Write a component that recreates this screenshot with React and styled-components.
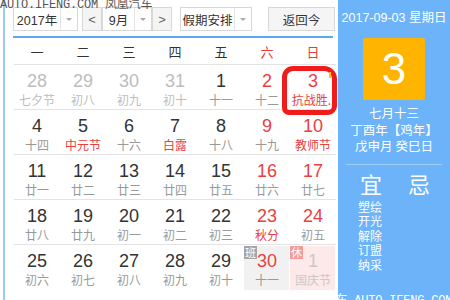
import styled, { createGlobalStyle } from 'styled-components';

const GlobalStyle = createGlobalStyle`
  html, body {
    margin: 0;
    padding: 0;
    background: #fff;
    overflow: hidden;
  }
  body {
    font-family: "Noto Sans CJK SC", "Liberation Sans", sans-serif;
  }
`;

const Page = styled.div`
  position: relative;
  width: 450px;
  height: 300px;
  overflow: hidden;
  background: #fff;
`;

const Frame = styled.div`
  margin-left: 3px;
  height: 300px;
  display: flex;
  border-left: 2px solid #9fc9f5;
`;

const CalendarArea = styled.div`
  width: 333px;
  flex-shrink: 0;
  position: relative;
`;

const Toolbar = styled.div`
  display: flex;
  align-items: center;
  height: 24px;
  margin: 7px 0 0 8px;
`;

const SelectBox = styled.div`
  display: flex;
  align-items: stretch;
  height: 22px;
  width: ${p => p.$w}px;
  border: 1px solid #d8d8d8;
  background: #fff;
  margin-left: ${p => p.$ml || 0}px;
  font-size: 12.5px;
  color: #333;
`;

const SelectLabel = styled.div`
  flex: 1;
  display: flex;
  align-items: center;
  justify-content: center;
  font-family: "Liberation Sans", "Noto Sans CJK SC", sans-serif;
`;

const SelectArrow = styled.div`
  width: 16px;
  border-left: 1px solid #e4e4e4;
  display: flex;
  align-items: center;
  justify-content: center;
  &::after {
    content: '';
    border-left: 3px solid transparent;
    border-right: 3px solid transparent;
    border-top: 3px solid #aaa;
  }
`;

const StepButton = styled.div`
  width: 18px;
  height: 22px;
  border: 1px solid #d8d8d8;
  background: #f4f4f4;
  margin-left: ${p => p.$ml || 0}px;
  display: flex;
  align-items: center;
  justify-content: center;
  color: #666;
  font-size: 13px;
  font-family: "Liberation Sans", sans-serif;
`;

const TodayButton = styled.div`
  width: 65px;
  height: 22px;
  border: 1px solid #d8d8d8;
  background: #f5f5f5;
  margin-left: 16px;
  display: flex;
  align-items: center;
  justify-content: center;
  font-size: 12.5px;
  color: #333;
`;

const BlueRule = styled.div`
  height: 2px;
  background: #5aa7f4;
  margin: 5px 5px 0 8px;
`;

const Grid = styled.div`
  display: grid;
  grid-template-columns: repeat(7, 46px);
  margin-left: 9px;
`;

const WeekHead = styled.div`
  height: 26px;
  display: flex;
  align-items: center;
  justify-content: center;
  font-size: 13px;
  color: ${p => (p.$red ? '#e53b3b' : '#333')};
  border-bottom: 1px solid #e3e3e3;
`;

const Cell = styled.div`
  position: relative;
  height: 45px;
  border-bottom: ${p => (p.$last ? 'none' : '1px solid #e3e3e3')};
  display: flex;
  flex-direction: column;
  align-items: center;
  padding-top: 6px;
  box-sizing: border-box;
  &::before {
    content: '';
    position: absolute;
    left: 0;
    right: 1px;
    top: 1px;
    bottom: 0;
    background: ${p => p.$bg || 'transparent'};
    z-index: 0;
  }
`;

const DayNum = styled.div`
  position: relative;
  font-family: "Liberation Sans", sans-serif;
  font-size: 18px;
  line-height: 21px;
  color: ${p => p.$c};
`;

const Lunar = styled.div`
  position: relative;
  font-size: 12px;
  line-height: 15px;
  color: ${p => p.$c};
  white-space: nowrap;
`;

const Badge = styled.div`
  position: absolute;
  left: 0;
  top: 1px;
  width: 13px;
  height: 13px;
  font-size: 11px;
  line-height: 13px;
  text-align: center;
  color: #fff;
  background: ${p => p.$bg};
  z-index: 1;
`;

const Marker = styled.div`
  position: absolute;
  left: 277px;
  top: 66px;
  width: 45px;
  height: 39px;
  border: 5px solid #f01c1c;
  border-radius: 11px 13px 9px 7px;
  pointer-events: none;
  &::after {
    content: '';
    position: absolute;
    right: 1px;
    top: 1px;
    width: 2px;
    height: 6px;
    background: #f6c21a;
  }
`;

const SidePanel = styled.div`
  flex: 1;
  background: #6cb3fa;
  color: #fff;
  display: flex;
  flex-direction: column;
  align-items: center;
`;

const SideDate = styled.div`
  margin-top: 9px;
  font-size: 12.5px;
  line-height: 18px;
  font-family: "Liberation Sans", "Noto Sans CJK SC", sans-serif;
`;

const BigDay = styled.div`
  margin-top: 11px;
  width: 62px;
  height: 62px;
  background: #ffb400;
  border-radius: 2px;
  display: flex;
  align-items: center;
  justify-content: center;
  font-family: "Liberation Sans", sans-serif;
  font-size: 44px;
  color: #fff;
`;

const InfoLine = styled.div`
  font-size: 12.5px;
  line-height: 16.5px;
  margin-top: ${p => p.$mt || 0}px;
`;

const SideRule = styled.div`
  align-self: stretch;
  height: 1px;
  background: #9dcdfb;
  margin: 9px 8px 0 8px;
`;

const YiJi = styled.div`
  display: flex;
  gap: 26px;
  margin-top: 5px;
  font-size: 22px;
  line-height: 26px;
  margin-left: 2px;
`;

const YiList = styled.div`
  align-self: flex-start;
  margin-left: 20px;
  margin-top: 4px;
  font-size: 12px;
  line-height: 14.6px;
`;

const Watermark = styled.div`
  position: absolute;
  font-family: "Liberation Mono", "Noto Sans CJK SC", monospace;
  font-size: 12px;
  white-space: nowrap;
  color: ${p => p.$c};
  left: ${p => p.$x}px;
  top: ${p => p.$y}px;
  letter-spacing: -0.2px;
`;

const weekdays = ['一', '二', '三', '四', '五', '六', '日'];

const RED = '#e8403f';
const DARK = '#333';
const GRAY = '#999';
const FADE = '#bdbdbd';

const days = [
  ['28', '七夕节', 'prev'], ['29', '初八', 'prev'], ['30', '初九', 'prev'], ['31', '初十', 'prev'],
  ['1', '十一'], ['2', '十二'], ['3', '抗战胜..', null, true],
  ['4', '十四'], ['5', '中元节', null, true], ['6', '十六'], ['7', '白露', null, true],
  ['8', '十八'], ['9', '十九'], ['10', '教师节', null, true],
  ['11', '廿一'], ['12', '廿二'], ['13', '廿三'], ['14', '廿四'],
  ['15', '廿五'], ['16', '廿六'], ['17', '廿七'],
  ['18', '廿八'], ['19', '廿九'], ['20', '初一'], ['21', '初二'],
  ['22', '初三'], ['23', '秋分', null, true], ['24', '初五'],
  ['25', '初六'], ['26', '初七'], ['27', '初八'], ['28', '初九'],
  ['29', '初十'], ['30', '十一', 'work'], ['1', '国庆节', 'rest'],
];

function DayCell({ day, index }) {
  const [num, lunar, kind, fest] = day;
  const col = index % 7;
  const weekend = col >= 5;
  const last = index >= 28;
  let numColor = weekend ? RED : DARK;
  let lunarColor = fest ? RED : GRAY;
  let bg;
  if (kind === 'prev') {
    numColor = FADE;
    lunarColor = FADE;
  }
  if (kind === 'work') bg = '#f1f1f1';
  if (kind === 'rest') {
    bg = '#fde9e9';
    numColor = '#c8c8c8';
    lunarColor = '#c8c8c8';
  }
  return (
    <Cell $bg={bg} $last={last}>
      {kind === 'work' && <Badge $bg="#a5a5a5">班</Badge>}
      {kind === 'rest' && <Badge $bg="#f59a9a">休</Badge>}
      <DayNum $c={numColor}>{num}</DayNum>
      <Lunar $c={lunarColor}>{lunar}</Lunar>
    </Cell>
  );
}

export default function App() {
  return (
    <Page>
      <GlobalStyle />
      <Frame>
        <CalendarArea>
          <Toolbar>
            <SelectBox $w={63}>
              <SelectLabel>2017年</SelectLabel>
              <SelectArrow />
            </SelectBox>
            <StepButton $ml={4}>&lt;</StepButton>
            <SelectBox $w={48}>
              <SelectLabel>9月</SelectLabel>
              <SelectArrow />
            </SelectBox>
            <StepButton>&gt;</StepButton>
            <SelectBox $w={70} $ml={8}>
              <SelectLabel>假期安排</SelectLabel>
              <SelectArrow />
            </SelectBox>
            <TodayButton>返回今</TodayButton>
          </Toolbar>
          <BlueRule />
          <Grid>
            {weekdays.map((w, i) => (
              <WeekHead key={w} $red={i >= 5}>{w}</WeekHead>
            ))}
            {days.map((d, i) => (
              <DayCell key={i} day={d} index={i} />
            ))}
          </Grid>
          <Marker />
        </CalendarArea>
        <SidePanel>
          <SideDate>2017-09-03 星期日</SideDate>
          <BigDay>3</BigDay>
          <InfoLine $mt={5}>七月十三</InfoLine>
          <InfoLine>丁酉年【鸡年】</InfoLine>
          <InfoLine>戊申月 癸巳日</InfoLine>
          <SideRule />
          <YiJi>
            <span>宜</span>
            <span>忌</span>
          </YiJi>
          <YiList>
            <div>塑绘</div>
            <div>开光</div>
            <div>解除</div>
            <div>订盟</div>
            <div>纳采</div>
          </YiList>
        </SidePanel>
      </Frame>
      <Watermark $c="#555" $x={0} $y={-6}>AUTO.IFENG.COM 凤凰汽车</Watermark>
      <Watermark $c="#fff" $x={300} $y={290}>凤凰汽车 AUTO.IFENG.COM</Watermark>
    </Page>
  );
}
